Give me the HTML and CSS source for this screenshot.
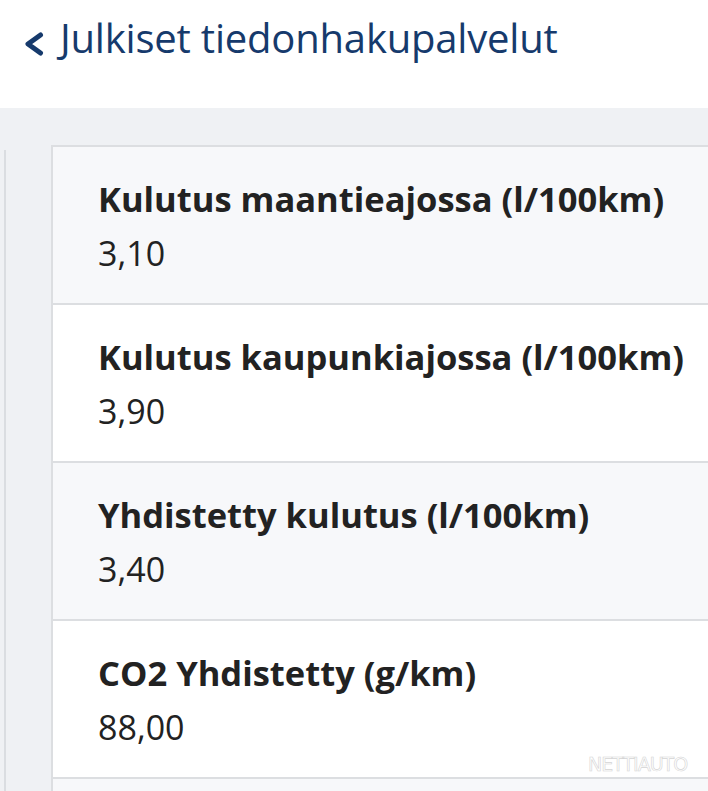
FILE: index.html
```html
<!DOCTYPE html>
<html lang="fi">
<head>
<meta charset="utf-8">
<link rel="stylesheet" href="styles.css">
</head>
<body>
<header class="top">
  <svg class="chev" width="22" height="28" viewBox="0 0 22 28"><path d="M17.5 5 L5 14 L17.5 23" fill="none" stroke="#163a6c" stroke-width="5" stroke-linecap="round" stroke-linejoin="round"/></svg>
  <h1 class="title">Julkiset tiedonhakupalvelut</h1>
</header>
<main class="panel">
  <div class="rail"></div>
  <div class="list">
    <div class="row alt"><div class="label">Kulutus maantieajossa (l/100km)</div><div class="value">3,10</div></div>
    <div class="row"><div class="label">Kulutus kaupunkiajossa (l/100km)</div><div class="value">3,90</div></div>
    <div class="row alt"><div class="label">Yhdistetty kulutus (l/100km)</div><div class="value">3,40</div></div>
    <div class="row"><div class="label">CO2 Yhdistetty (g/km)</div><div class="value">88,00</div></div>
    <div class="row alt"></div>
  </div>
</main>
<div class="mark">NETTIAUTO</div>
</body>
</html>
```
FILE: styles.css
```css
html, body { margin: 0; padding: 0; background: #fff; }
body { width: 708px; height: 791px; overflow: hidden; position: relative; font-family: "Open Sans", "Noto Sans", sans-serif; }
.top { height: 108px; display: flex; align-items: flex-start; padding-left: 23px; box-sizing: border-box; }
.chev { margin-top: 30px; margin-right: 15px; flex: none; }
.title { margin: 10px 0 0; font-size: 40px; font-weight: 400; color: #163a6c; line-height: 56px; letter-spacing: -0.2px; white-space: nowrap; }
.panel { background: #eff1f4; display: flex; padding-top: 37px; height: 646px; overflow: hidden; }
.rail { width: 2px; margin: 5px 45px 0 4px; background: #dadde1; flex: none; }
.list { border-top: 2px solid #dcdee1; border-left: 2px solid #dcdee1; flex: 1; min-width: 0; }
.row { background: #fff; border-bottom: 2px solid #dcdee1; height: 156px; padding: 0 0 0 45px; }
.row.alt { background: #f7f8fa; }
.label { padding-top: 29px; font-size: 34.5px; font-weight: 700; color: #222; line-height: 46px; white-space: nowrap; }
.value { font-size: 34px; font-weight: 400; color: #222; line-height: 46px; margin-top: 8px; }
.mark { position: absolute; left: 588px; top: 753px; font-family: "DejaVu Sans", sans-serif; font-size: 19px; color: transparent; -webkit-text-stroke: 0.6px #d4d4d4; letter-spacing: -1px; }
```
